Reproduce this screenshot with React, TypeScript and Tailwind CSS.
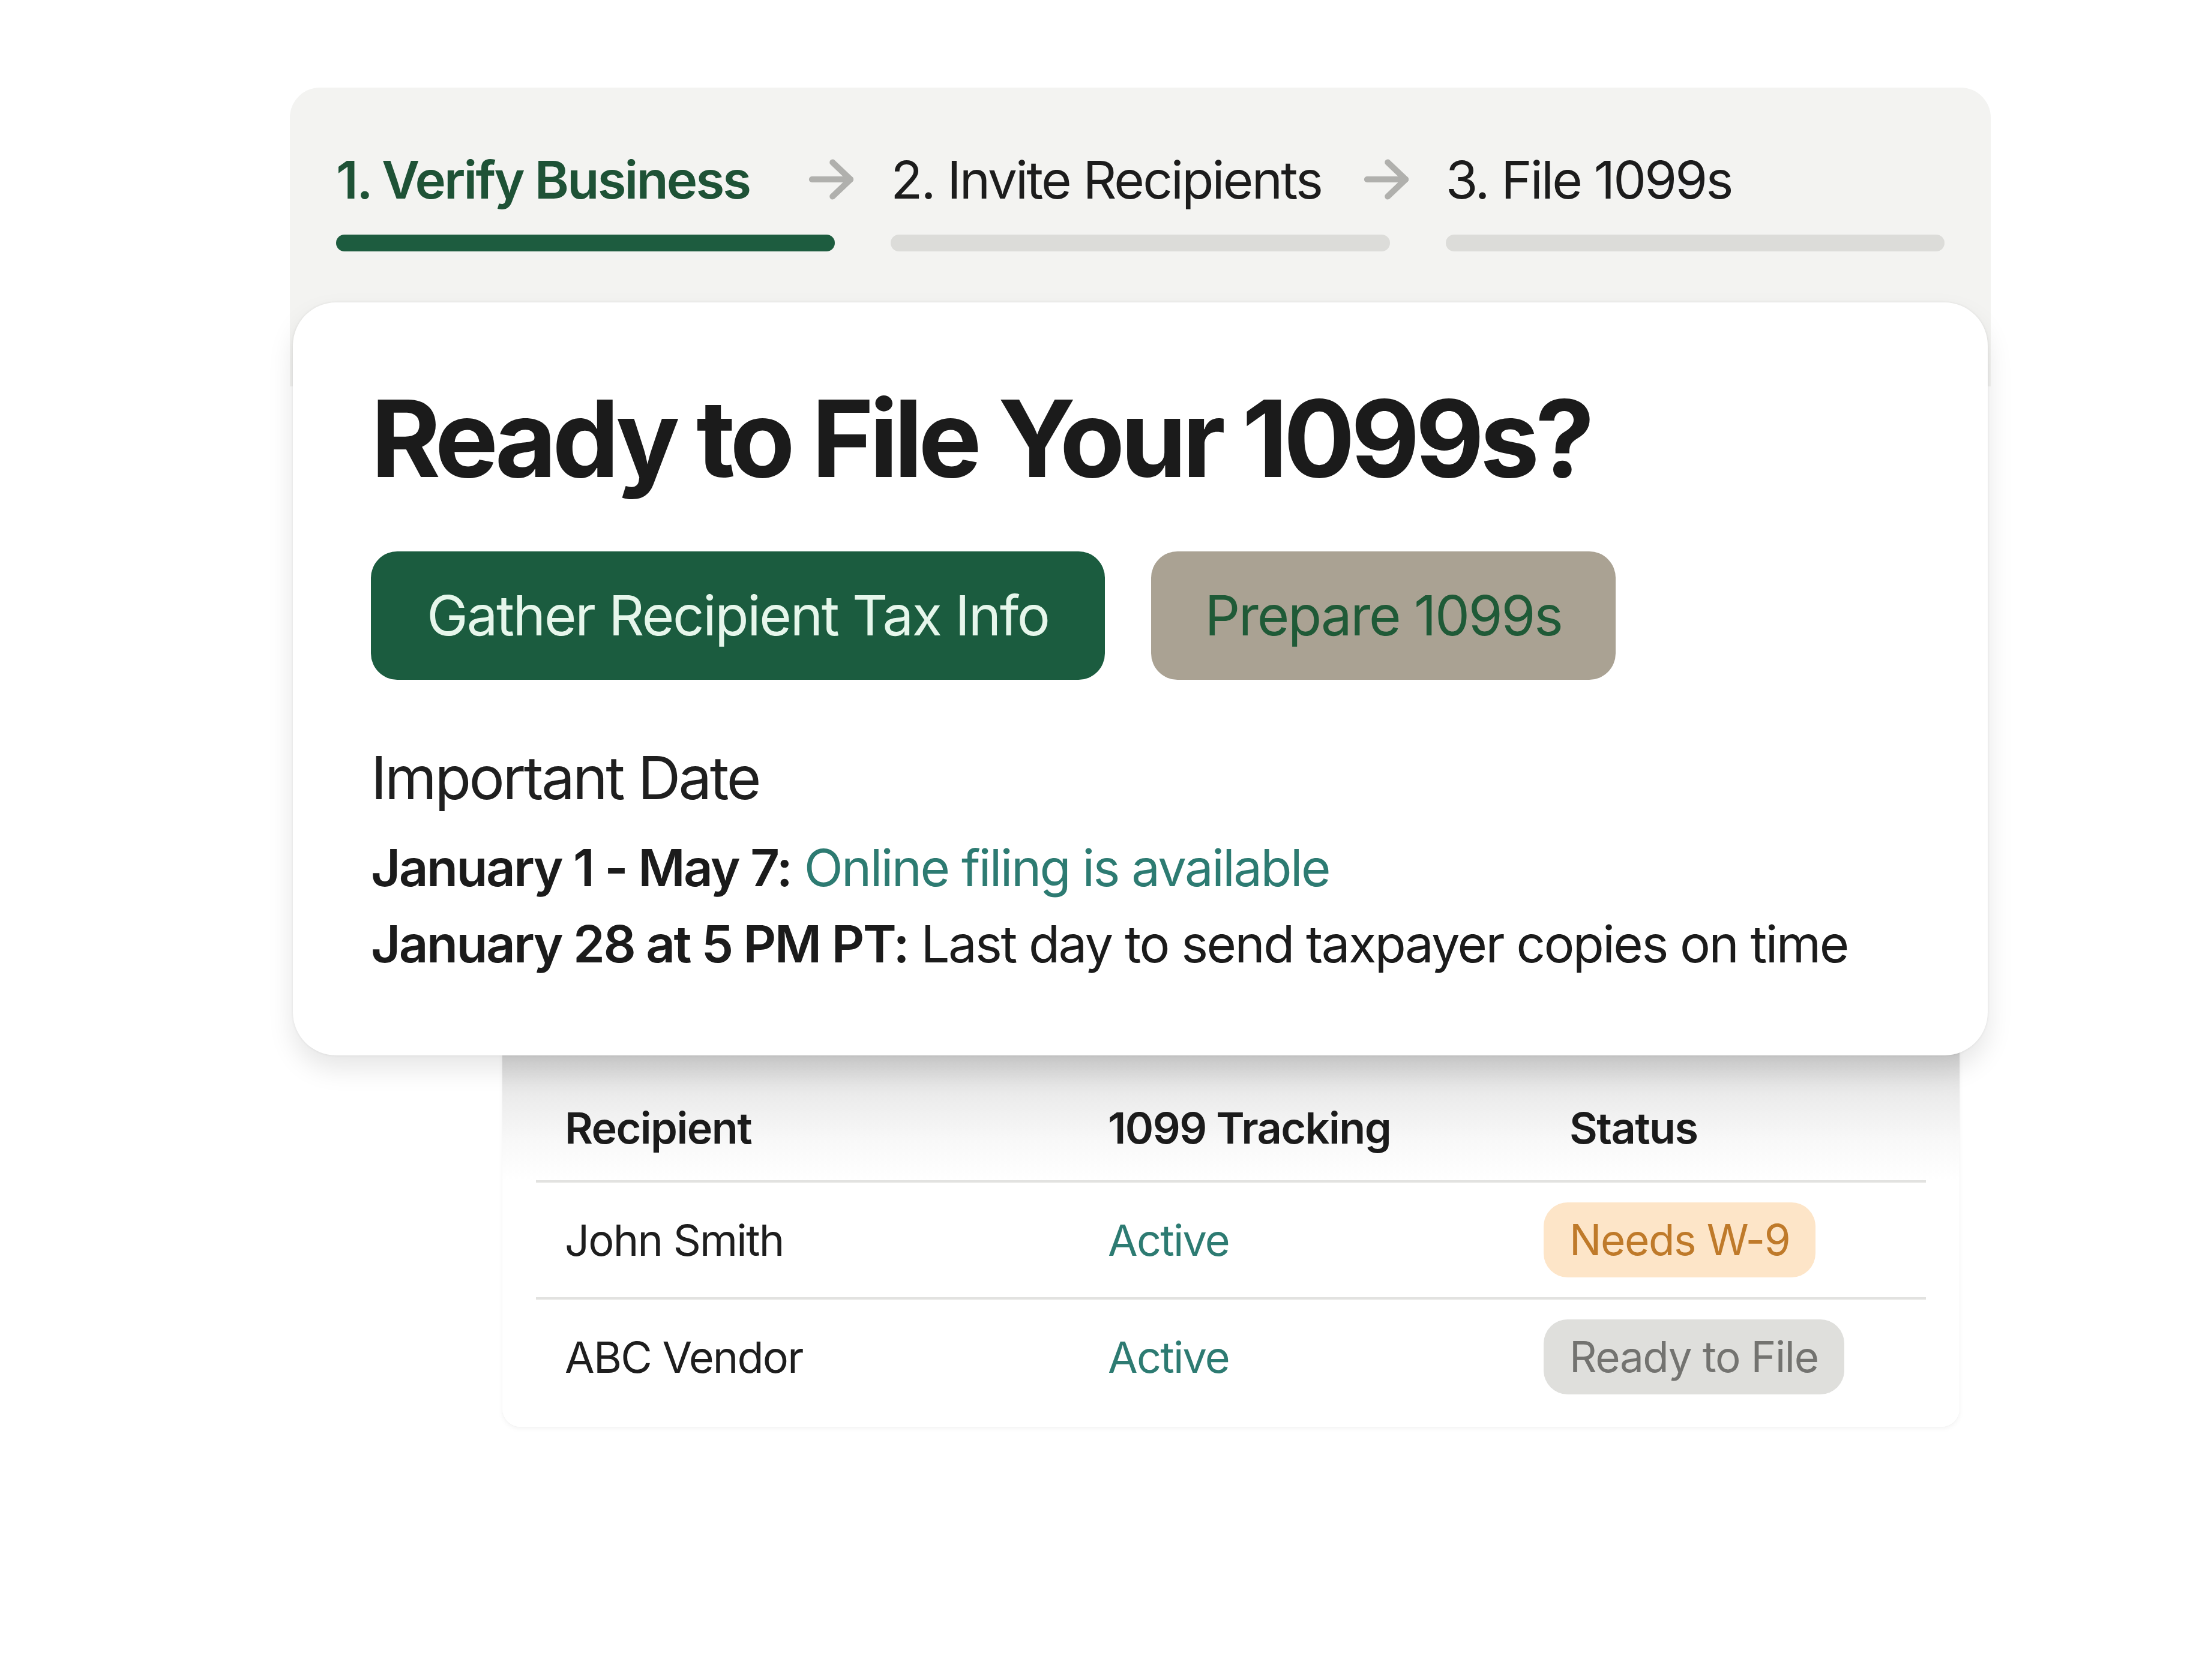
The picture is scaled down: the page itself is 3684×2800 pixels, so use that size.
import React from "react";

function Arrow() {
  return (
    <svg width="110" height="110" viewBox="0 0 24 24" fill="none" stroke="#b0b0ad" strokeWidth="2.2" strokeLinecap="round" strokeLinejoin="round" className="-mr-[49px] shrink-0">
      <path d="M5 12h14" />
      <path d="M12.5 5.8L19 12l-6.5 6.2" />
    </svg>
  );
}

function Step({ label, active, arrow }: { label: string; active?: boolean; arrow?: boolean }) {
  return (
    <div className="flex flex-col">
      <div className="flex h-[110px] items-center justify-between">
        <span
          className={
            active
              ? "text-[87px] leading-none font-semibold tracking-[-0.033em] text-[#1e5236]"
              : "text-[87px] leading-none font-normal tracking-[-0.033em] text-[#1c1c1c]"
          }
        >
          {label}
        </span>
        {arrow ? <Arrow /> : null}
      </div>
      <div className={active ? "mt-[37px] h-[28px] rounded-full bg-[#1d5c3f]" : "mt-[37px] h-[28px] rounded-full bg-[#dcdcd9]"} />
    </div>
  );
}

function Badge({ text, tone }: { text: string; tone: "orange" | "gray" }) {
  return (
    <span
      className={
        tone === "orange"
          ? "-ml-[43px] inline-flex h-[125px] items-center rounded-[40px] bg-[#fde5c8] px-[43px] text-[71px] tracking-[-0.02em] text-[#bf7a2a]"
          : "-ml-[43px] inline-flex h-[125px] items-center rounded-[40px] bg-[#dfdfdc] px-[43px] text-[71px] tracking-[-0.02em] text-[#737370]"
      }
    >
      {text}
    </span>
  );
}

export default function App() {
  return (
    <div className="w-[3684px] h-[2800px] bg-white font-['Inter','Noto_Sans',sans-serif] overflow-hidden">
      <div className="ml-[483px] w-[2834px] pt-[146px]">
        {/* Step panel */}
        <div className="rounded-t-[50px] bg-[#f3f3f1] px-[77px] pt-[98px] pb-[225px]">
          <div className="grid grid-cols-3 gap-[93px]">
            <Step label="1. Verify Business" active arrow />
            <Step label="2. Invite Recipients" arrow />
            <Step label="3. File 1099s" />
          </div>
        </div>

        {/* Main card */}
        <div className="relative z-10 mx-[5px] -mt-[140px] rounded-[72px] bg-white pl-[130px] pr-[80px] pt-[139px] pb-[122px] shadow-[0_22px_44px_rgba(0,0,0,0.10),0_0_4px_rgba(0,0,0,0.08)]">
          <h1 className="text-[177px] leading-none font-bold tracking-[-0.041em] text-[#1b1b1b]">
            Ready to File Your 1099s?
          </h1>
          <div className="mt-[99px] flex gap-[77px]">
            <button className="flex h-[214px] w-[1223px] items-center justify-center rounded-[44px] bg-[#1b5c3f] text-[92px] tracking-[-0.025em] text-[#e6f6eb]">
              Gather Recipient Tax Info
            </button>
            <button className="flex h-[214px] w-[774px] items-center justify-center rounded-[44px] bg-[#aaa293] text-[92px] tracking-[-0.025em] text-[#1f5a37]">
              Prepare 1099s
            </button>
          </div>
          <div className="mt-[107px] text-[99px] leading-[112px] tracking-[-0.035em] text-[#1f1f1f]">Important Date</div>
          <div className="mt-[31px] text-[85px] leading-[127px] tracking-[-0.03em] text-[#1b1b1b]">
            <div>
              <span className="font-semibold">January 1 - May 7:</span>{" "}
              <span className="text-[#2d7b72]">Online filing is available</span>
            </div>
            <div>
              <span className="font-semibold">January 28 at 5 PM PT:</span> Last day to send taxpayer copies on time
            </div>
          </div>
        </div>

        {/* Table panel */}
        <div className="relative z-0 ml-[354px] mr-[52px] -mt-[60px] rounded-b-[30px] bg-[linear-gradient(to_bottom,#d4d4d4_0px,#d8d8d8_60px,#ececec_130px,#f8f8f8_200px,#ffffff_270px)] px-[56px] pt-[60px] pb-[21px] shadow-[0_3px_8px_rgba(0,0,0,0.05),0_0_2px_rgba(0,0,0,0.06)]">
          <div className="grid grid-cols-[905px_769px_1fr] pl-[48px] pt-[77px] pb-[43px] text-[72px] leading-[88px] font-semibold tracking-[-0.022em] text-[#1b1b1b]">
            <span>Recipient</span>
            <span>1099 Tracking</span>
            <span>Status</span>
          </div>
          <div className="h-[4px] bg-[#e2e2e0]" />
          <div className="grid h-[191px] grid-cols-[905px_769px_1fr] items-center pl-[48px] text-[72px] tracking-[-0.025em] text-[#1e1e1e]">
            <span>John Smith</span>
            <span className="text-[#2d7b72]">Active</span>
            <span>
              <Badge text="Needs W-9" tone="orange" />
            </span>
          </div>
          <div className="h-[4px] bg-[#e2e2e0]" />
          <div className="grid h-[191px] grid-cols-[905px_769px_1fr] items-center pl-[48px] text-[72px] tracking-[-0.025em] text-[#1e1e1e]">
            <span>ABC Vendor</span>
            <span className="text-[#2d7b72]">Active</span>
            <span>
              <Badge text="Ready to File" tone="gray" />
            </span>
          </div>
        </div>
      </div>
    </div>
  );
}
